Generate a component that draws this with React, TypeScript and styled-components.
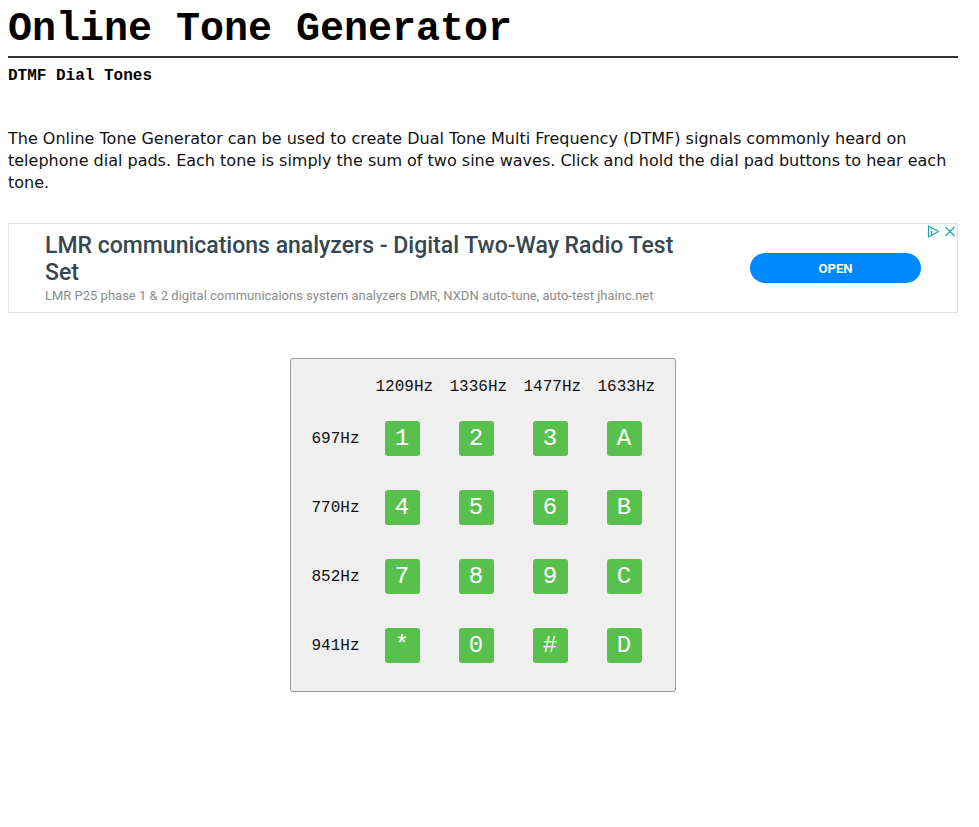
import React from "react";
import styled, { createGlobalStyle } from "styled-components";

const GlobalStyle = createGlobalStyle`
  * { box-sizing: border-box; }
  body {
    margin: 0;
    background: #fff;
    color: #000;
    font-family: Verdana, "DejaVu Sans", sans-serif;
  }
`;

const Page = styled.main`
  padding: 8px 21px 32px 8px;
`;

const Title = styled.h1`
  margin: 0;
  padding-bottom: 4px;
  border-bottom: 2px solid #333;
  font: bold 40px/44px "Courier New", "Liberation Mono", monospace;
`;

const Subtitle = styled.h2`
  margin: 8px 0 0;
  font: bold 16px/20px "Courier New", "Liberation Mono", monospace;
`;

const Intro = styled.p`
  margin: 42px 0 29px;
  color: #111;
  font-size: 16px;
  line-height: 22px;
`;

const Ad = styled.aside`
  position: relative;
  display: flex;
  align-items: center;
  justify-content: space-between;
  height: 90px;
  padding: 0 36px;
  border: 1px solid #e5e5e5;
  font-family: Roboto, sans-serif;
`;

const AdText = styled.div`
  max-width: 640px;
  padding-top: 2px;
`;

const AdTitle = styled.a`
  display: block;
  color: #37474f;
  font-size: 23px;
  font-weight: 500;
  line-height: 27px;
  text-decoration: none;
`;

const AdBody = styled.p`
  margin: 0;
  color: #8c8c8c;
  font-size: 13px;
  line-height: 20px;
`;

const OpenButton = styled.button`
  width: 171px;
  height: 30px;
  border: 0;
  border-radius: 15px;
  background: #0088ff;
  color: #fff;
  font: bold 13px Roboto, sans-serif;
`;

const AdMarks = styled.svg`
  position: absolute;
  top: 0;
  right: 0;
`;

const Pad = styled.section`
  width: fit-content;
  margin: 45px auto 0;
  padding: 9px 11px 11px 12px;
  border: 1px solid #999;
  border-radius: 3px;
  background: #efefef;
`;

const ToneTable = styled.table`
  border-collapse: collapse;
  color: #111;
  font: 16px "Courier New", "Liberation Mono", monospace;
`;

const ColumnFrequency = styled.th`
  width: 74px;
  height: 36px;
  padding: 2px 8px 0;
  font-weight: normal;
  text-align: left;
`;

const RowFrequency = styled.th`
  width: 64px;
  padding: 0 8px;
  font-weight: normal;
  text-align: left;
`;

const KeyCell = styled.td`
  height: 69px;
  padding: 0 0 0 17px;
`;

const Key = styled.button`
  display: block;
  width: 35px;
  height: 35px;
  padding: 0;
  border: 0;
  border-radius: 3px;
  background: #58c14e;
  color: #fff;
  font: 24px/35px "Courier New", "Liberation Mono", monospace;
`;

const columns = ["1209Hz", "1336Hz", "1477Hz", "1633Hz"];
const rows = [
  { frequency: "697Hz", keys: ["1", "2", "3", "A"] },
  { frequency: "770Hz", keys: ["4", "5", "6", "B"] },
  { frequency: "852Hz", keys: ["7", "8", "9", "C"] },
  { frequency: "941Hz", keys: ["*", "0", "#", "D"] },
];

export default function App() {
  return (
    <Page>
      <GlobalStyle />
      <Title>Online Tone Generator</Title>
      <Subtitle>DTMF Dial Tones</Subtitle>
      <Intro>
        The Online Tone Generator can be used to create Dual Tone Multi Frequency (DTMF) signals
        commonly heard on telephone dial pads. Each tone is simply the sum of two sine waves. Click
        and hold the dial pad buttons to hear each tone.
      </Intro>
      <Ad>
        <AdText>
          <AdTitle href="#">LMR communications analyzers - Digital Two-Way Radio Test Set</AdTitle>
          <AdBody>
            LMR P25 phase 1 &amp; 2 digital communicaions system analyzers DMR, NXDN auto-tune,
            auto-test jhainc.net
          </AdBody>
        </AdText>
        <OpenButton type="button">OPEN</OpenButton>
        <AdMarks width="32" height="15" viewBox="0 0 32 15" fill="none" stroke="#1aa5b8" strokeWidth="1.2">
          <path d="M3.5 2v11l10-5.5z" strokeLinejoin="round" />
          <path d="M6.5 4.5v1M6.5 7v4" />
          <path d="M20.5 3l9 9m0-9l-9 9" />
        </AdMarks>
      </Ad>
      <Pad>
        <ToneTable>
          <thead>
            <tr>
              <td />
              {columns.map((c) => (
                <ColumnFrequency key={c} scope="col">{c}</ColumnFrequency>
              ))}
            </tr>
          </thead>
          <tbody>
            {rows.map((row) => (
              <tr key={row.frequency}>
                <RowFrequency scope="row">{row.frequency}</RowFrequency>
                {row.keys.map((k) => (
                  <KeyCell key={k}><Key type="button">{k}</Key></KeyCell>
                ))}
              </tr>
            ))}
          </tbody>
        </ToneTable>
      </Pad>
    </Page>
  );
}
